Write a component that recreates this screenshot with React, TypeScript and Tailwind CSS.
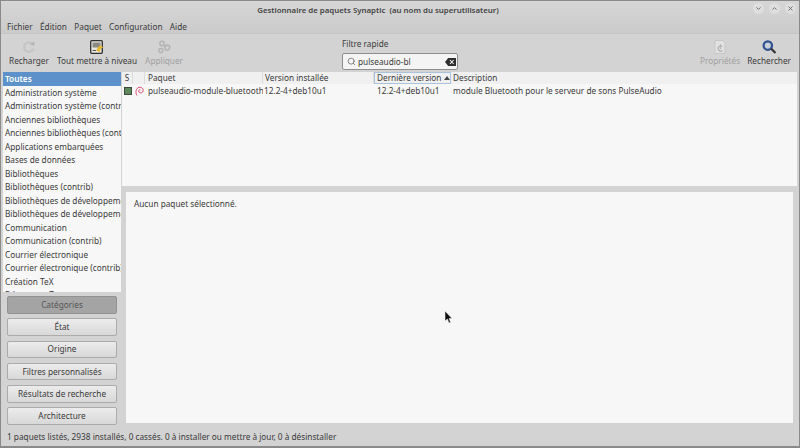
import { Search, ChevronDown, ChevronUp, X } from "lucide-react";

const categories = [
  "Administration système",
  "Administration système (contrib)",
  "Anciennes bibliothèques",
  "Anciennes bibliothèques (contrib)",
  "Applications embarquées",
  "Bases de données",
  "Bibliothèques",
  "Bibliothèques (contrib)",
  "Bibliothèques de développement",
  "Bibliothèques de développement (contrib)",
  "Communication",
  "Communication (contrib)",
  "Courrier électronique",
  "Courrier électronique (contrib)",
  "Création TeX",
  "Démons et Tests",
];

const filters = ["Catégories", "État", "Origine", "Filtres personnalisés", "Résultats de recherche", "Architecture"];

function ReloadIcon() {
  return (
    <svg width="14" height="14" viewBox="0 0 14 14" fill="none">
      <path d="M10.6 4.2A4.7 4.7 0 1 0 11.4 8.6" stroke="#c6c6c6" strokeWidth="2.3" />
      <path d="M8 4.8 12.4 5.6 12.2 1.2Z" fill="#b4b4b4" />
    </svg>
  );
}

function UpgradeIcon() {
  return (
    <svg width="14" height="14" viewBox="0 0 14 14" fill="none">
      <rect x="0.7" y="0.7" width="11.6" height="12.6" rx="1" fill="#e6e6e0" stroke="#2e2e2e" strokeWidth="1.3" />
      <rect x="2.5" y="2.5" width="8" height="5" fill="#8a8a80" />
      <path d="M6 10.5 9.5 5.5 13.5 7 10.5 9 10 12Z" fill="#e8b92e" />
      <path d="M2.5 10.5H6" stroke="#555" strokeWidth="1" />
    </svg>
  );
}

function ApplyIcon() {
  return (
    <svg width="14" height="14" viewBox="0 0 14 14" fill="none" stroke="#b4b4b4">
      <circle cx="5" cy="3.5" r="2.2" strokeWidth="1.5" />
      <circle cx="10.2" cy="7.6" r="2.5" strokeWidth="1.6" />
      <circle cx="3.8" cy="10.5" r="2" strokeWidth="1.4" />
    </svg>
  );
}

function PropsIcon() {
  return (
    <svg width="14" height="14" viewBox="0 0 14 14" fill="none">
      <path d="M2 .5h7.5l2.5 2.5v10.5H2Z" fill="#e2e2e2" stroke="#c6c6c6" />
      <path d="M9.5 6.5a2.6 2.6 0 1 0 0 4" stroke="#b0b0b0" strokeWidth="1.2" />
      <path d="M7.5 4v5" stroke="#b8b8b8" strokeWidth="1.1" />
    </svg>
  );
}

function SearchBigIcon() {
  return (
    <svg width="15" height="14" viewBox="0 0 15 14" fill="none">
      <circle cx="5.8" cy="5.6" r="4.2" stroke="#2f4f8f" strokeWidth="2.2" fill="#c9cfd8" />
      <path d="M9.2 8.8 13.5 13" stroke="#333" strokeWidth="2.2" />
    </svg>
  );
}

function SwirlIcon() {
  return (
    <svg width="9" height="11" viewBox="0 0 9 11" fill="none">
      <path d="M2 9.5C.5 7.5.5 3.5 3 1.8 5.5.4 8.3 2 8.2 4.5 8 7 5 7.6 3.8 6 3.2 4.8 4.2 3.6 5.4 3.8" stroke="#d7305c" strokeWidth="0.9" />
    </svg>
  );
}

function ClearIcon() {
  return (
    <svg width="11" height="8" viewBox="0 0 11 8">
      <path d="M3.2 0H11V8H3.2L0 4Z" fill="#2e2e2e" />
      <path d="M5 2 8.6 6M8.6 2 5 6" stroke="#f4f4f4" strokeWidth="1.1" />
    </svg>
  );
}

function ToolButton({ icon, label, disabled = false }: { icon: React.ReactNode; label: string; disabled?: boolean }) {
  return (
    <div className={`flex flex-col items-center gap-[1px] whitespace-nowrap ${disabled ? "text-[#a0a0a0]" : "text-[#3a3a3a]"}`}>
      <div className="h-[14px] flex items-center justify-center">{icon}</div>
      <span>{label}</span>
    </div>
  );
}

function WinButton({ children }: { children: React.ReactNode }) {
  return (
    <div className="w-[11px] h-[11px] rounded-full bg-[#dedede] flex items-center justify-center text-[#666]">
      {children}
    </div>
  );
}

function HeaderCell({ label, className }: { label: string; className: string }) {
  return (
    <div className={`h-full flex items-center px-[2px] border-r border-[#dcdcdc] whitespace-nowrap overflow-hidden ${className}`}>
      {label}
    </div>
  );
}

export default function App() {
  return (
    <div
      className="relative w-[800px] h-[448px] overflow-hidden flex flex-col bg-[#d3d3d3] border border-[#8a8a8a] border-b-2 text-[8.25px] leading-[12px] text-[#3a3a3a]"
      style={{ fontFamily: '"Noto Sans", sans-serif' }}
    >
      {/* title bar + menu */}
      <div className="h-[33px] shrink-0 bg-gradient-to-b from-[#d6d6d6] to-[#cbcbcb] border-b border-[#c6c6c6] flex flex-col">
        <div className="h-[19px] flex items-center relative">
          <div className="flex-1 text-center text-[7.85px] font-semibold text-[#444] pr-[44px] pb-[1px]">
            Gestionnaire de paquets Synaptic&nbsp; (au nom du superutilisateur)
          </div>
          <div className="absolute right-[3px] top-[2px] flex gap-[5px]">
            <WinButton><ChevronDown size={7} strokeWidth={3} /></WinButton>
            <WinButton><ChevronUp size={7} strokeWidth={3} /></WinButton>
            <WinButton><X size={7} strokeWidth={3} /></WinButton>
          </div>
        </div>
        <div className="flex gap-[7.3px] pl-[6px] pt-[1px]">
          <span>Fichier</span>
          <span>Édition</span>
          <span>Paquet</span>
          <span>Configuration</span>
          <span>Aide</span>
        </div>
      </div>

      {/* toolbar */}
      <div className="h-[38px] shrink-0 flex items-start pt-[6px] pl-[8px] pr-[8px]">
        <div className="flex gap-[8px]">
          <ToolButton icon={<ReloadIcon />} label="Recharger" />
          <ToolButton icon={<UpgradeIcon />} label="Tout mettre à niveau" />
          <ToolButton icon={<ApplyIcon />} label="Appliquer" disabled />
        </div>
        <div className="ml-[159px] -mt-[2px] flex flex-col">
          <span className="pb-[3px]">Filtre rapide</span>
          <div className="w-[116px] h-[17px] rounded-[2px] bg-[#f4f4f4] border border-[#8e8e8e] flex items-center pl-[3px] pr-[1px]">
            <Search size={9} className="text-[#666] ml-[1px]" />
            <span className="ml-[2px] flex-1">pulseaudio-bl</span>
            <ClearIcon />
          </div>
        </div>
        <div className="ml-auto flex gap-[7px]">
          <ToolButton icon={<PropsIcon />} label="Propriétés" disabled />
          <ToolButton icon={<SearchBigIcon />} label="Rechercher" />
        </div>
      </div>

      {/* body */}
      <div className="flex-1 min-h-0 flex pl-[2px] pr-[2px]">
        <div className="w-[118px] shrink-0 flex flex-col">
          <div className="h-[220px] shrink-0 bg-[#f7f7f7] overflow-hidden">
            <div className="h-[14px] bg-[#5c92c9] text-white font-semibold flex items-center pl-[2px]">Toutes</div>
            {categories.map((c) => (
              <div key={c} className="h-[13.5px] flex items-center pl-[2px] whitespace-nowrap">{c}</div>
            ))}
          </div>
          <div className="flex-1 flex flex-col gap-[4.8px] pt-[4px] pl-[4px] pr-[4px]">
            {filters.map((f, i) => (
              <div
                key={f}
                className={`h-[17.5px] shrink-0 rounded-[2px] border flex items-center justify-center ${
                  i === 0
                    ? "bg-[#a4a4a4] border-[#929292] text-[#555]"
                    : "bg-gradient-to-b from-[#ececec] to-[#d8d8d8] border-[#ababab]"
                }`}
              >
                {f}
              </div>
            ))}
          </div>
        </div>

        <div className="flex-1 min-w-0 flex flex-col pl-[1px]">
          <div className="h-[114px] shrink-0 bg-[#f7f7f7] flex flex-col">
            <div className="h-[12px] bg-[#f0f0f0] flex items-center">
              <HeaderCell label="S" className="w-[11px] justify-center" />
              <HeaderCell label="" className="w-[12px]" />
              <HeaderCell label="Paquet" className="w-[118px] pl-[3px]" />
              <HeaderCell label="Version installée" className="w-[111px]" />
              <div className="w-[77px] h-full flex items-center px-[2px] border border-[#a9c3de] whitespace-nowrap">
                Dernière version
                <span className="ml-[3px] w-0 h-0 border-l-[3px] border-r-[3px] border-b-[4px] border-l-transparent border-r-transparent border-b-[#444]" />
              </div>
              <div className="flex-1 h-full flex items-center px-[2px]">Description</div>
            </div>
            <div className="h-[14px] flex items-center whitespace-nowrap">
              <div className="w-[11px] flex justify-center">
                <div className="w-[8px] h-[8px] bg-[#5d8a5d] border border-[#3b4a3b]" />
              </div>
              <div className="w-[12px] flex justify-center"><SwirlIcon /></div>
              <div className="w-[118px] pl-[3px] overflow-hidden">pulseaudio-module-bluetooth</div>
              <div className="w-[111px] pl-[1px]">12.2-4+deb10u1</div>
              <div className="w-[77px] pl-[3px]">12.2-4+deb10u1</div>
              <div className="pl-[2px]">module Bluetooth pour le serveur de sons PulseAudio</div>
            </div>
          </div>
          <div className="flex-1 pt-[6px] pb-[4px] pl-[4px] pr-[4px] flex flex-col">
            <div className="flex-1 bg-[#f7f7f7] pl-[8px] pt-[6px]">Aucun paquet sélectionné.</div>
          </div>
        </div>
      </div>

      {/* status bar */}
      <div className="h-[19px] shrink-0 flex items-center pl-[6px] pt-[1px]">
        1 paquets listés, 2938 installés, 0 cassés. 0 à installer ou mettre à jour, 0 à désinstaller
      </div>

      {/* mouse cursor */}
      <svg className="absolute left-[443px] top-[310px]" width="9" height="13" viewBox="0 0 9 13">
        <path d="M1 0v10l2.4-2 1.6 4 1.6-.7-1.6-3.8H8Z" fill="#111" stroke="#f4f4f4" strokeWidth="0.5" />
      </svg>
    </div>
  );
}
